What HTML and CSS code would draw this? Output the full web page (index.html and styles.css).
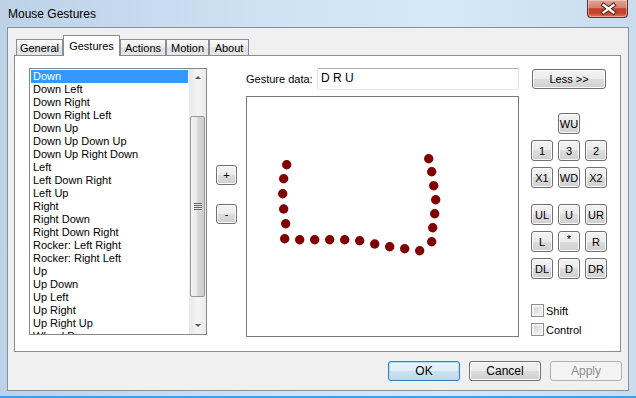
FILE: index.html
```html
<!DOCTYPE html>
<html lang="en">
<head>
    <meta charset="UTF-8">
    <title>Mouse Gestures</title>
    <link rel="stylesheet" href="styles.css">
</head>
<body>
    <div class="window">
        <div class="titlebar">
            <span class="title">Mouse Gestures</span>
            <button class="close">
                <svg width="41" height="17" viewBox="0 0 41 17">
                    <path d="M15.5 5 L25.5 12.5 M25.5 5 L15.5 12.5" stroke="#4a2a26" stroke-width="4.2" stroke-linecap="square" fill="none"/>
                    <path d="M15.5 5 L25.5 12.5 M25.5 5 L15.5 12.5" stroke="#fff" stroke-width="2.2" stroke-linecap="square" fill="none"/>
                </svg>
            </button>
        </div>
        <div class="client">
            <div class="tabs">
                <div class="tab t-general">General</div>
                <div class="tab t-gestures active">Gestures</div>
                <div class="tab t-actions">Actions</div>
                <div class="tab t-motion">Motion</div>
                <div class="tab t-about">About</div>
            </div>
            <div class="panel">
                <div class="listbox">
                    <ul class="items">
                        <li class="sel">Down</li>
                        <li>Down Left</li>
                        <li>Down Right</li>
                        <li>Down Right Left</li>
                        <li>Down Up</li>
                        <li>Down Up Down Up</li>
                        <li>Down Up Right Down</li>
                        <li>Left</li>
                        <li>Left Down Right</li>
                        <li>Left Up</li>
                        <li>Right</li>
                        <li>Right Down</li>
                        <li>Right Down Right</li>
                        <li>Rocker: Left Right</li>
                        <li>Rocker: Right Left</li>
                        <li>Up</li>
                        <li>Up Down</li>
                        <li>Up Left</li>
                        <li>Up Right</li>
                        <li>Up Right Up</li>
                        <li>Wheel Down</li>
                    </ul>
                    <div class="scrollbar">
                        <div class="arrow up"></div>
                        <div class="track"><div class="thumb"><span class="grip"></span></div></div>
                        <div class="arrow down"></div>
                    </div>
                </div>

                <div class="addremove">
                    <button class="btn sq">+</button>
                    <button class="btn sq">-</button>
                </div>

                <div class="gesture">
                    <div class="data-row">
                        <span class="label">Gesture data:</span>
                        <div class="field">D R U</div>
                    </div>
                    <div class="canvas">
                        <svg width="271" height="238" viewBox="0 0 271 238">
                            <g fill="#800000">
                                <circle cx="39.7" cy="67.7" r="4.7"/>
                                <circle cx="36.7" cy="81.7" r="4.7"/>
                                <circle cx="35.7" cy="96.7" r="4.7"/>
                                <circle cx="36.7" cy="112" r="4.7"/>
                                <circle cx="38.7" cy="126.7" r="4.7"/>
                                <circle cx="37.7" cy="141.7" r="4.7"/>
                                <circle cx="52.7" cy="142.7" r="4.7"/>
                                <circle cx="67.7" cy="142.7" r="4.7"/>
                                <circle cx="82.7" cy="142.7" r="4.7"/>
                                <circle cx="97.7" cy="142.7" r="4.7"/>
                                <circle cx="112.7" cy="143.7" r="4.7"/>
                                <circle cx="127.7" cy="147" r="4.7"/>
                                <circle cx="142.7" cy="149.7" r="4.7"/>
                                <circle cx="157.7" cy="151.7" r="4.7"/>
                                <circle cx="172.7" cy="153.7" r="4.7"/>
                                <circle cx="184.7" cy="144.7" r="4.7"/>
                                <circle cx="185.7" cy="130.7" r="4.7"/>
                                <circle cx="187.7" cy="116.7" r="4.7"/>
                                <circle cx="188.7" cy="102.7" r="4.7"/>
                                <circle cx="186.7" cy="88.7" r="4.7"/>
                                <circle cx="184.7" cy="74.7" r="4.7"/>
                                <circle cx="181.7" cy="61.7" r="4.7"/>
                            </g>
                        </svg>
                    </div>
                </div>

                <div class="side">
                    <button class="btn less">Less &gt;&gt;</button>
                    <div class="pad">
                        <span></span><button class="btn">WU</button><span></span>
                        <button class="btn">1</button><button class="btn">3</button><button class="btn">2</button>
                        <button class="btn">X1</button><button class="btn">WD</button><button class="btn">X2</button>
                    </div>
                    <div class="pad second">
                        <button class="btn">UL</button><button class="btn">U</button><button class="btn">UR</button>
                        <button class="btn">L</button><button class="btn star">*</button><button class="btn">R</button>
                        <button class="btn">DL</button><button class="btn">D</button><button class="btn">DR</button>
                    </div>
                    <label class="check first"><span class="box"></span>Shift</label>
                    <label class="check"><span class="box"></span>Control</label>
                </div>
            </div>
            <div class="actions">
                <button class="btn wide default">OK</button>
                <button class="btn wide">Cancel</button>
                <button class="btn wide disabled">Apply</button>
            </div>
        </div>
    </div>
</body>
</html>
```

FILE: styles.css
```css
body {
    margin: 0;
    width: 636px;
    height: 398px;
    overflow: hidden;
    font-family: "Liberation Sans", Arial, sans-serif;
    font-size: 11px;
    color: #000;
}

/* window frame */
.window {
    height: 398px;
    box-sizing: border-box;
    display: flex;
    flex-direction: column;
    background: linear-gradient(to right, #bdd2e6, #cfe3f4 45%, #d6e9f8 70%, #c8dcee);
    border-bottom: 2px solid #3aa2e4;
}

.titlebar {
    height: 27px;
    flex: none;
    display: flex;
    align-items: center;
    padding-left: 8px;
}
.title {
    font-size: 12px;
    margin-top: 1px;
}
.close {
    align-self: flex-start;
    margin-left: auto;
    margin-right: 8px;
    width: 41px;
    height: 18px;
    padding: 0;
    border: 1px solid #5b3430;
    border-top: 0;
    border-radius: 0 0 4px 4px;
    background: linear-gradient(#e3a594, #d58170 45%, #c0402b 52%, #c9452c 78%, #e2795a);
    box-shadow: inset 0 0 0 1px rgba(255,255,255,.35);
}
.close svg {
    display: block;
}

.client {
    height: 364px;
    flex: none;
    box-sizing: border-box;
    margin: 0 7px;
    padding: 7px 7px 9px 6px;
    border: 1px solid #84929f;
    background: #f0f0f0;
}

/* tabs */
.tabs {
    display: flex;
    align-items: flex-end;
    height: 20px;
    padding-left: 2px;
    position: relative;
    z-index: 1;
}
.tab {
    height: 16px;
    box-sizing: border-box;
    display: flex;
    align-items: center;
    justify-content: center;
    border: 1px solid #898c95;
    border-bottom: 0;
    background: linear-gradient(#fbfbfb, #eeeeee 45%, #e0e0e0 55%, #e6e6e6);
}
.tab.active {
    height: 21px;
    margin-bottom: -1px;
    background: #fff;
    padding-bottom: 1px;
}
.t-general { width: 47px; }
.t-gestures { width: 57px; }
.t-actions { width: 46px; }
.t-motion { width: 43px; }
.t-about { width: 40px; }

.panel {
    height: 297px;
    box-sizing: border-box;
    display: flex;
    align-items: flex-start;
    padding: 12px 12px 0 14px;
    border: 1px solid #898c95;
    background: #fff;
}

/* list */
.listbox {
    width: 178px;
    height: 267px;
    box-sizing: border-box;
    display: flex;
    border: 1px solid #828790;
}
.items {
    flex: 1;
    margin: 0;
    padding: 1px;
    list-style: none;
    overflow: hidden;
}
.items li {
    height: 13px;
    line-height: 13px;
    padding-left: 2px;
    white-space: nowrap;
}
.items li.sel {
    background: #3399ff;
    color: #fff;
}

.scrollbar {
    width: 17px;
    display: flex;
    flex-direction: column;
    background: linear-gradient(to right, #e8e8e8, #f4f4f4 50%, #ececec);
}
.arrow {
    height: 17px;
    flex: none;
    display: flex;
    align-items: center;
    justify-content: center;
}
.arrow::before {
    content: "";
    border-left: 3px solid transparent;
    border-right: 3px solid transparent;
}
.arrow.up::before {
    border-bottom: 3px solid #5a5a5a;
}
.arrow.down::before {
    border-top: 3px solid #5a5a5a;
}
.track {
    flex: 1;
}
.thumb {
    margin: 30px 1px 0;
    height: 181px;
    box-sizing: border-box;
    display: flex;
    align-items: center;
    justify-content: center;
    border: 1px solid #999;
    border-radius: 2px;
    background: linear-gradient(to right, #f6f6f6, #e6e6e6 45%, #d5d5d5 55%, #cdcdcd);
}
.grip {
    width: 8px;
    height: 8px;
    background: repeating-linear-gradient(#5f5f5f 0 1px, #e9e9e9 1px 2px);
}

/* buttons */
.btn {
    font: inherit;
    color: #000;
    padding: 0;
    box-sizing: border-box;
    border: 1px solid #707070;
    border-radius: 3px;
    background: linear-gradient(#f3f3f3, #ebebeb 50%, #dddddd 50%, #cfcfcf);
    box-shadow: inset 0 0 0 1px #fbfbfb;
}
.sq {
    width: 21px;
    height: 20px;
}
.addremove {
    display: flex;
    flex-direction: column;
    gap: 19px;
    margin: 97px 9px 0;
}

/* gesture view */
.gesture {
    width: 273px;
}
.data-row {
    display: flex;
    align-items: center;
    height: 22px;
}
.label {
    width: 71px;
}
.field {
    flex: 1;
    height: 22px;
    box-sizing: border-box;
    padding-left: 3px;
    line-height: 19px;
    font-size: 12px;
    border: 1px solid;
    border-color: #abadb3 #dbdfe6 #e3e9ef #e2e3ea;
    border-radius: 2px;
}
.canvas {
    margin-top: 6px;
    height: 241px;
    box-sizing: border-box;
    border: 1px solid #7a7a7a;
}
.canvas svg {
    display: block;
}

/* right side */
.side {
    width: 76px;
    margin-left: 12px;
    display: flex;
    flex-direction: column;
}
.less {
    width: 74px;
    height: 20px;
    margin: 1px 0 0 1px;
}
.pad {
    display: grid;
    grid-template-columns: repeat(3, 22px);
    grid-auto-rows: 21px;
    gap: 6px 5px;
    margin-top: 24px;
}
.pad.second {
    margin-top: 16px;
}
.star {
    line-height: 12px;
    padding-bottom: 6px;
}
.check {
    display: flex;
    align-items: center;
    gap: 2px;
    height: 13px;
    margin-top: 6px;
}
.check.first {
    margin-top: 25px;
}
.box {
    width: 13px;
    height: 13px;
    box-sizing: border-box;
    border: 1px solid #8f8f8f;
    background: linear-gradient(135deg, #cfcfcf, #f7f7f7);
    box-shadow: inset 0 0 0 2px #f4f4f4;
}

/* dialog buttons */
.actions {
    display: flex;
    justify-content: flex-end;
    gap: 9px;
    margin: 9px -1px 0 0;
}
.wide {
    width: 72px;
    height: 20px;
    font-size: 12px;
}
.default {
    border-color: #3c7fb1;
    background: linear-gradient(#eaf4fa, #dfeef8 50%, #cce3f1 50%, #bcdaee);
    box-shadow: inset 0 0 0 1px #a6e0fb;
}
.disabled {
    color: #8d8d8d;
    border-color: #adb2b5;
    background: #f4f4f4;
    box-shadow: none;
}
```
